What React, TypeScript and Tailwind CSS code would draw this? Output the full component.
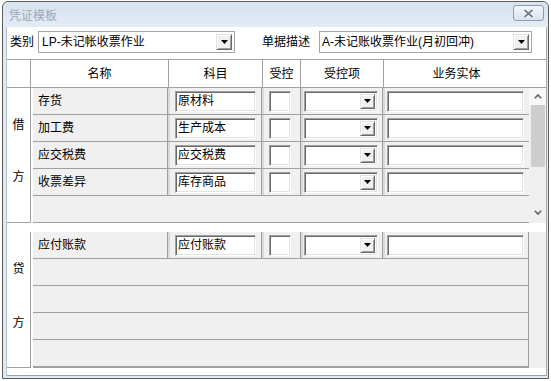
import React from 'react';

const sunken =
  'bg-white border border-t-[#a0a0a0] border-l-[#a0a0a0] border-r-white border-b-white shadow-[inset_1px_1px_0_#696969,inset_-1px_-1px_0_#e3e3e3]';
const raised =
  'bg-[#f0f0f0] border border-t-[#e3e3e3] border-l-[#e3e3e3] border-r-[#696969] border-b-[#696969] shadow-[inset_1px_1px_0_#ffffff,inset_-1px_-1px_0_#a0a0a0]';

const debitRows = [
  { name: '存货', account: '原材料' },
  { name: '加工费', account: '生产成本' },
  { name: '应交税费', account: '应交税费' },
  { name: '收票差异', account: '库存商品' },
];

function DropButton({ className }: { className: string }) {
  return (
    <div className={`${raised} ${className} flex items-center justify-center shrink-0`}>
      <svg width="7" height="4" viewBox="0 0 7 4">
        <path d="M0 0h7L3.5 4z" fill="#000" />
      </svg>
    </div>
  );
}

function Chevron({ down }: { down?: boolean }) {
  return (
    <svg width="8" height="5" viewBox="0 0 8 5">
      <path
        d={down ? 'M0.8 0.8L4 4L7.2 0.8' : 'M0.8 4.2L4 1L7.2 4.2'}
        stroke="#606060"
        strokeWidth="1.6"
        fill="none"
      />
    </svg>
  );
}

function Sep() {
  return <div className="w-[3px] self-stretch bg-[#dadada] border-l border-[#a0a0a0] shrink-0" />;
}

function EntryRow({ name, account }: { name: string; account: string }) {
  return (
    <div className="h-[27px] flex border-b border-[#a0a0a0] shrink-0">
      <div className="w-[134px] flex items-center pl-[5px]">{name}</div>
      <Sep />
      <div className="w-[91px] flex items-center pl-[5px]">
        <div className={`${sunken} w-[81px] h-[21px] flex items-center pl-[2px]`}>{account}</div>
      </div>
      <Sep />
      <div className="w-[36px] flex items-center pl-[5px]">
        <div className={`${sunken} w-[22px] h-[21px]`} />
      </div>
      <Sep />
      <div className="w-[79px] flex items-center pl-[1px]">
        <div className={`${sunken} w-[74px] h-[21px] flex items-center justify-end pr-[2px]`}>
          <DropButton className="w-[15px] h-[15px]" />
        </div>
      </div>
      <Sep />
      <div className="flex-1 flex items-center pl-[2px]">
        <div className={`${sunken} w-[137px] h-[21px]`} />
      </div>
    </div>
  );
}

export default function App() {
  return (
    <div className="w-[551px] h-[381px] bg-white overflow-hidden text-[12px] leading-[14px] text-black font-['Liberation_Sans','Noto_Sans_CJK_SC',sans-serif]">
      <div className="ml-[2px] mt-[1px] w-[547px] h-[378px] border border-[#5c5c5c] rounded-t-[6px] bg-[#dfe8f3] flex flex-col">
        {/* Title bar */}
        <div className="h-[25px] flex items-start shrink-0 rounded-t-[6px] bg-gradient-to-b from-[#d8e3f0] to-[#e3ebf5]">
          <span className="pl-[6px] pt-[7px] text-[#a0a9b4]">凭证模板</span>
          <div className="ml-auto mr-[4px] mt-[3px] w-[31px] h-[16px] rounded-[3px] border border-[#8d9bb0] bg-gradient-to-b from-[#f4f7fb] to-[#dbe3ee] flex items-center justify-center">
            <svg width="11" height="9" viewBox="0 0 11 9">
              <path d="M1.5 1L9.5 8M9.5 1L1.5 8" stroke="#ffffff" strokeWidth="3.4" />
              <path d="M1.5 1L9.5 8M9.5 1L1.5 8" stroke="#6f7b8b" strokeWidth="1.8" />
            </svg>
          </div>
        </div>

        {/* Content */}
        <div className="ml-[3px] w-[541px] h-[349px] bg-white border-x border-l-[#b8c2cf] border-r-[#a5a5a5] flex flex-col">
          {/* Type / description */}
          <div className="mt-[4px] h-[22px] flex items-center shrink-0">
            <span className="ml-[3px] w-[28px]">类别</span>
            <div className="w-[197px] h-[22px] border border-[#a5a5a5] flex items-center pl-[3px] pr-[2px]">
              <span className="flex-1">LP-未记帐收票作业</span>
              <DropButton className="w-[16px] h-[16px]" />
            </div>
            <span className="ml-[27px] w-[57px]">单据描述</span>
            <div className="w-[213px] h-[22px] border border-[#a5a5a5] flex items-center pl-[2px] pr-[2px]">
              <span className="flex-1">A-未记账收票作业(月初回冲)</span>
              <DropButton className="w-[16px] h-[16px]" />
            </div>
          </div>

          {/* Grid header */}
          <div className="mt-[6px] h-[29px] flex border-y border-[#a0a0a0] shrink-0">
            <div className="w-[24px] border-r border-[#a0a0a0]" />
            <div className="w-[138px] border-r border-[#a0a0a0] flex items-center justify-center">名称</div>
            <div className="w-[94px] border-r border-[#a0a0a0] flex items-center justify-center">科目</div>
            <div className="w-[38px] border-r border-[#a0a0a0] flex items-center justify-center">受控</div>
            <div className="w-[83px] border-r border-[#a0a0a0] flex items-center justify-center">受控项</div>
            <div className="w-[145px] flex items-center justify-center">业务实体</div>
          </div>

          {/* Debit */}
          <div className="h-[135px] flex shrink-0">
            <div className="w-[24px] border-r border-b border-[#a0a0a0] flex flex-col items-center pt-[30px] gap-[38px]">
              <span>借</span>
              <span>方</span>
            </div>
            <div className="w-[496px] ml-[2px] bg-[#f0f0f0] border-b border-[#a0a0a0] flex flex-col">
              {debitRows.map((r) => (
                <EntryRow key={r.name} name={r.name} account={r.account} />
              ))}
            </div>
            <div className="w-[17px] flex flex-col bg-[#f0f0f0]">
              <div className="h-[17px] bg-[#f7f7f7] flex items-center justify-center">
                <Chevron />
              </div>
              <div className="ml-[2px] w-[14px] h-[62px] bg-[#cdcdcd]" />
              <div className="flex-1" />
              <div className="h-[18px] flex items-start justify-center pt-[5px]">
                <Chevron down />
              </div>
            </div>
          </div>

          {/* Credit */}
          <div className="mt-[9px] h-[136px] flex shrink-0">
            <div className="w-[24px] border-r border-b border-[#a0a0a0] flex flex-col items-center pt-[30px] gap-[40px]">
              <span>贷</span>
              <span>方</span>
            </div>
            <div className="w-[496px] ml-[2px] bg-[#f0f0f0] border-r border-b-2 border-[#a0a0a0] flex flex-col">
              <EntryRow name="应付账款" account="应付账款" />
              <div className="h-[27px] border-b border-[#a0a0a0]" />
              <div className="h-[27px] border-b border-[#a0a0a0]" />
              <div className="h-[27px] border-b border-[#a0a0a0]" />
              <div className="h-[26px]" />
            </div>
            <div className="w-[17px] bg-[#f0f0f0]" />
          </div>

          {/* Bottom strip */}
          <div className="h-[8px] border-b border-[#a0a0a0] shrink-0" />
        </div>
      </div>
    </div>
  );
}
